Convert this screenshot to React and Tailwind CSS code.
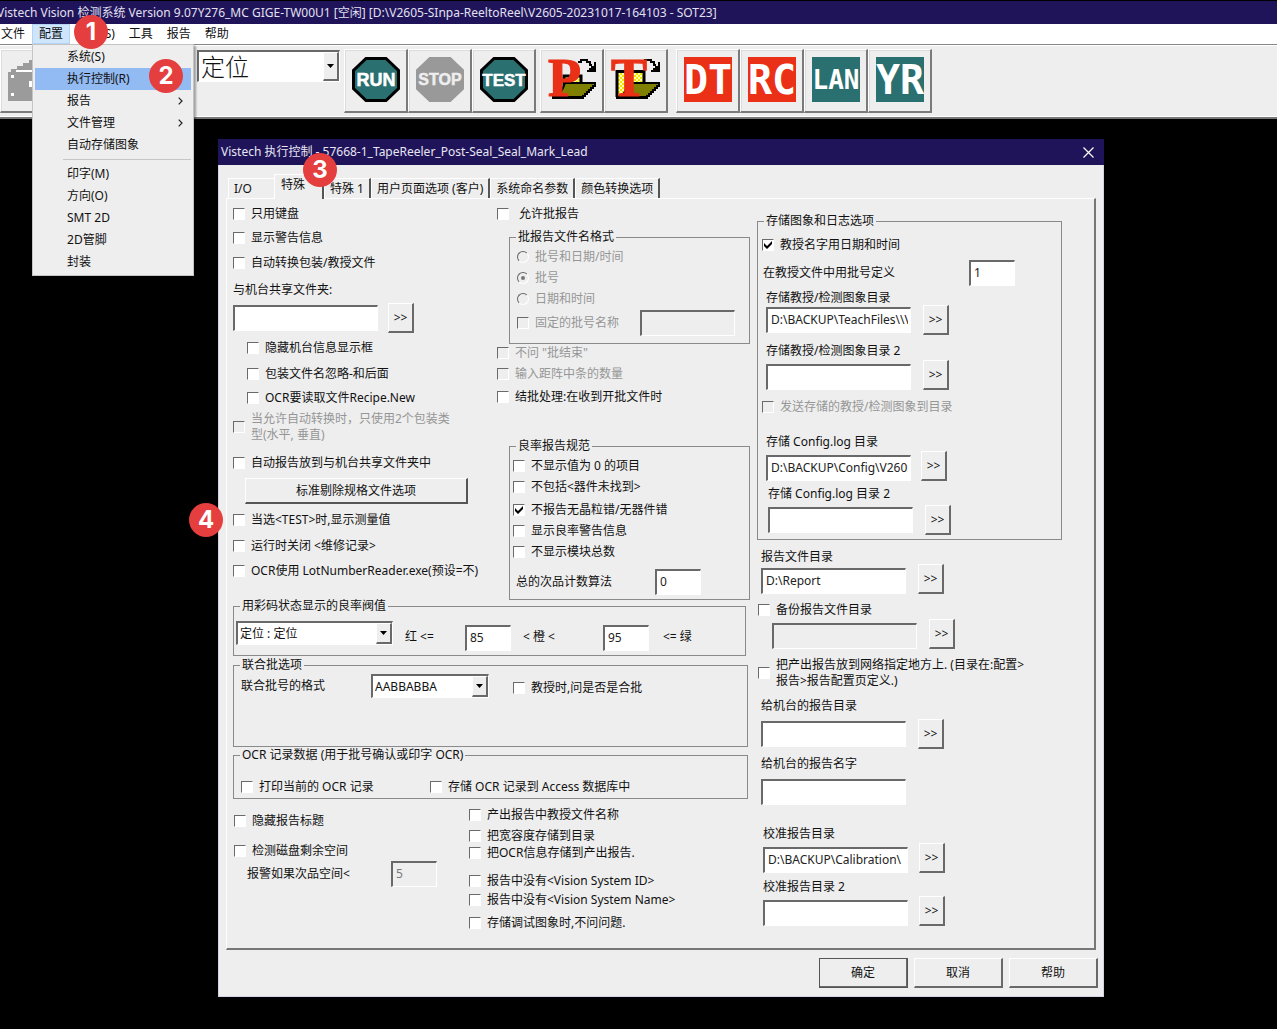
import React, { useId } from "react";

const CHECK_PATH = "M2 4v3l3 3 5-5V2L5 7z";

function Badge({ n, className }) {
  return (
    <span
      className={`pointer-events-none absolute z-30 flex size-[34px] items-center justify-center rounded-full bg-[#e53e3e] font-['Inter','Liberation_Sans',sans-serif] text-2xl font-bold leading-none text-white ${className}`}
    >
      {n}
    </span>
  );
}

function Check({ label, className = "", gap = "gap-1.5", disabled, checked, children }) {
  return (
    <label className={`relative flex items-center ${gap} ${disabled ? "text-[#969696]" : ""} ${className}`}>
      <span className="grid size-3 shrink-0">
        <input
          type="checkbox"
          defaultChecked={checked}
          disabled={disabled}
          className="peer col-start-1 row-start-1 size-3 appearance-none border border-b-white border-l-[#6a6a6a] border-r-white border-t-[#6a6a6a] bg-white disabled:bg-[#eeeeee]"
        />
        <svg viewBox="0 0 12 12" className="pointer-events-none invisible col-start-1 row-start-1 size-3 peer-checked:visible">
          <path d={CHECK_PATH} fill="#000" />
        </svg>
      </span>
      <span className="leading-4">{label}</span>
      {children}
    </label>
  );
}

function Radio({ label, className = "", checked }) {
  return (
    <label className={`flex items-center gap-1.5 text-[#969696] ${className}`}>
      <span className="grid size-3 shrink-0">
        <input
          type="radio"
          name="lot-name-format"
          disabled
          defaultChecked={checked}
          className="peer col-start-1 row-start-1 size-3 appearance-none rounded-full border border-b-white border-l-[#666] border-r-white border-t-[#666] bg-[#eeeeee]"
        />
        <span className="invisible col-start-1 row-start-1 size-1 place-self-center rounded-full bg-[#777] peer-checked:visible" />
      </span>
      <span className="leading-4">{label}</span>
    </label>
  );
}

function TextBox({ className = "w-36", id, label, value = "", disabled }) {
  return (
    <input
      id={id}
      aria-label={label}
      type="text"
      defaultValue={value}
      disabled={disabled}
      className={`h-[26px] min-w-0 shrink-0 border-b border-l-2 border-r border-t-2 border-b-white border-l-[#696969] border-r-white border-t-[#696969] bg-white pb-0.5 pl-[3px] pr-0.5 text-[#222] disabled:bg-[#eeeeee] disabled:text-[#777] ${className}`}
    />
  );
}

function Browse({ className = "", label = "浏览" }) {
  return (
    <button
      type="button"
      aria-label={label}
      className={`h-[30px] w-[26px] shrink-0 border-b-2 border-l border-r-2 border-t border-b-[#696969] border-l-white border-r-[#696969] border-t-white bg-[#eeeeee] ${className}`}
    >
      &gt;&gt;
    </button>
  );
}

function PathRow({ label, value, className = "", rowClass = "mt-1", boxGap = "gap-3", align = "items-center", browse = true }) {
  const id = useId();
  return (
    <div className={className}>
      <label htmlFor={id} className="block leading-4">{label}</label>
      <div className={`flex ${align} ${boxGap} ${rowClass}`}>
        <TextBox id={id} value={value} className="w-[145px]" />
        {browse && <Browse label={`浏览 ${label}`} />}
      </div>
    </div>
  );
}

function Group({ title, className = "", pad = "", children }) {
  return (
    <fieldset className={`min-w-0 border border-[#8a8a8a] ${className}`}>
      <legend className="ml-1.5 px-0.5 leading-4">{title}</legend>
      <div className={`flow-root ${pad}`}>{children}</div>
    </fieldset>
  );
}

function Combo({ value, label, className = "", big }) {
  return (
    <span className={`grid shrink-0 ${className}`}>
      <select
        aria-label={label}
        defaultValue={value}
        className={`col-start-1 row-start-1 w-full appearance-none border-b border-l-2 border-r border-t-2 border-b-white border-l-[#696969] border-r-white border-t-[#696969] bg-white pl-0.5 ${
          big ? "h-8 text-2xl font-light leading-none" : "h-6"
        }`}
      >
        <option>{value}</option>
      </select>
      <span
        className={`pointer-events-none col-start-1 row-start-1 mr-px mt-0.5 flex w-4 items-center justify-center justify-self-end border-b-2 border-l border-r-2 border-t border-b-[#696969] border-l-white border-r-[#696969] border-t-white bg-[#eeeeee] ${
          big ? "h-[29px]" : "h-[21px]"
        }`}
      >
        <svg viewBox="0 0 7 4" className="h-1 w-[7px] shrink-0"><path d="M0 0h7L3.5 4z" /></svg>
      </span>
    </span>
  );
}

function ToolButton({ label, children }) {
  return (
    <button
      type="button"
      aria-label={label}
      className="flex size-16 items-start justify-start border-b-2 border-l border-r-2 border-t border-b-[#7a7a7a] border-l-white border-r-[#7a7a7a] border-t-white bg-[#eeeeee] pl-[7px] pt-[7px] shadow-[inset_1px_1px_0_#dcdcdc]"
    >
      <svg viewBox="0 0 48 45" className="h-[45px] w-12 shrink-0 overflow-visible">{children}</svg>
    </button>
  );
}

function Octagon({ text, size, fill, stroke, color, y }) {
  return (
    <>
      <path d="M14 1.5h20l12.500 12v18l-12.500 12H14L1.500 31.500v-18z" fill={fill} stroke={stroke} strokeWidth="3" />
      <text x="24" y={y} textAnchor="middle" fontSize={size} fontWeight="700" fontFamily="Liberation Sans, sans-serif" fill={color} stroke={color} strokeWidth="0.5">{text}</text>
    </>
  );
}

function Sign({ text, fill, size, y, weight = 700 }) {
  return (
    <>
      <rect width="48" height="45" fill={fill} />
      <text x="24" y={y} textAnchor="middle" fontSize={size} fontWeight={weight} fontFamily="DejaVu Sans Mono, monospace" fill="#fff">{text}</text>
    </>
  );
}

function FolderIcon({ letter }) {
  const isT = letter === "T";
  return (
    <>
      <defs>
        <pattern id={`dots-${letter}`} width="4" height="4" patternUnits="userSpaceOnUse">
          <rect width="4" height="4" fill="#ffffb8" />
          <path d="M0 0h2v2H0zM2 2h2v2H2z" fill="#f2e600" />
        </pattern>
      </defs>
      <path d={isT ? "M5 40V14.500h27V26" : "M16 40V19h17v7"} fill={`url(#dots-${letter})`} stroke="#000" strokeWidth="3" />
      <path d="M17 26h30v3h-2v2h-2v2h-2v2h-2v2h-2v2h-2v2H9l3-5 3-5z" fill="#808000" stroke="#000" strokeWidth="2" />
      <path d="M4 39h32v3H4z" fill="#000" />
      <path d="M30 5h3V3h6v2h3v3h2" fill="none" stroke="#000" strokeWidth="2" />
      <path d="M48 5v10h-9v-2h2v-2h2V9h3V5z" fill="#000" />
      <text x={isT ? -1 : 0} y="39" fontSize="54" fontWeight="700" fontFamily="Liberation Serif, serif" fill="#ea3016" stroke="#ea3016" strokeWidth="1.200">{letter}</text>
    </>
  );
}

const MENU = [
  ["系统(S)"], ["执行控制(R)", "active"], ["报告", "sub"], ["文件管理", "sub"], ["自动存储图象"], null,
  ["印字(M)"], ["方向(O)"], ["SMT 2D"], ["2D管脚"], ["封装"],
];

function DropMenu() {
  return (
    <div role="menu" className="absolute left-0 top-full z-20 w-[162px] border border-[#c4c4c4] bg-[#eeeeee] px-0.5 pb-0.5 pt-px shadow-[2px_2px_2px_#00000055]">
      {MENU.map((item, i) =>
        item === null ? (
          <hr key={i} className="my-[3px] ml-7 border-t border-[#c6c6c6]" />
        ) : (
          <button
            key={i}
            type="button"
            role="menuitem"
            className={`relative flex h-[22px] w-full items-center justify-between pl-8 pr-2 text-left ${item[1] === "active" ? "bg-[#93bbf3]" : ""}`}
          >
            {item[0]}
            {item[1] === "sub" && (
              <svg viewBox="0 0 5 8" className="h-2 w-[5px]"><path d="M.7.7 4 4 .7 7.300" fill="none" stroke="#222" strokeWidth="1.200" /></svg>
            )}
            {item[1] === "active" && <Badge n="2" className="right-2 top-[-9px]" />}
          </button>
        )
      )}
    </div>
  );
}

function MenuBar() {
  return (
    <nav className="relative z-20 flex h-5 bg-white">
      <button type="button" className="-ml-1.5 px-[7px]">文件</button>
      <div className="relative">
        <button type="button" className="h-5 border border-[#b4d3f2] bg-[#cfe5fb] px-1.5">配置</button>
        <DropMenu />
      </div>
      <button type="button" className="relative px-[7px]">
        设置(S)
        <Badge n="1" className="left-1 top-[-9px]" />
      </button>
      <button type="button" className="px-[7px]">工具</button>
      <button type="button" className="px-[7px]">报告</button>
      <button type="button" className="px-[7px]">帮助</button>
    </nav>
  );
}

function Toolbar() {
  return (
    <div className="flex h-[75px] items-start border-b-2 border-t border-b-[#777] border-t-[#888] bg-[#eeeeee] pt-1 shadow-[inset_0_1px_0_#fff,inset_0_-1px_0_#fff]">
      <div className="mr-[133px]">
        <ToolButton label="相机">
          <path d="M0 16h3v-3h6v-3h6V7h6V4h6V1h21v44H0z" transform="translate(0 -1)" fill="#9b9b9b" />
          <path d="M8 13h20v2H8zM3 18h3v3H3zM21 24h3v6h-3zM3 36h3v3H3z" fill="#fff" />
        </ToolButton>
      </div>
      <Combo big value="定位" label="工位" className="mr-1 w-[143px] pt-px" />
      <div className="flex">
        <ToolButton label="RUN"><Octagon text="RUN" size="18" y="29" fill="#2b7071" stroke="#000" color="#fff" /></ToolButton>
        <ToolButton label="STOP"><Octagon text="STOP" size="16" y="28" fill="#999" stroke="#999" color="#eee" /></ToolButton>
        <ToolButton label="TEST"><Octagon text="TEST" size="17" y="29" fill="#2b7071" stroke="#000" color="#fff" /></ToolButton>
      </div>
      <div className="ml-1 flex">
        <ToolButton label="P"><FolderIcon letter="P" /></ToolButton>
        <ToolButton label="T"><FolderIcon letter="T" /></ToolButton>
      </div>
      <div className="ml-2 flex">
        <ToolButton label="DT"><Sign text="DT" size="40" y="37" fill="#ea3016" /></ToolButton>
        <ToolButton label="RC"><Sign text="RC" size="40" y="37" fill="#ea3016" /></ToolButton>
        <ToolButton label="LAN"><Sign text="LAN" size="26" y="32" fill="#2b7071" /></ToolButton>
        <ToolButton label="YR"><Sign text="YR" size="40" y="37" fill="#2b7071" /></ToolButton>
      </div>
    </div>
  );
}

function Tabs() {
  const tab = "h-5 border-l border-t border-white px-[5px] whitespace-nowrap text-left";
  return (
    <div role="tablist" className="ml-0.5 flex h-6 items-end">
      <button type="button" role="tab" className={`${tab} w-[46px]`}>I/O</button>
      <button
        type="button"
        role="tab"
        aria-selected="true"
        className="relative z-10 -mb-px h-[25px] w-[50px] border-l border-r-2 border-t border-l-white border-r-[#555] border-t-white bg-[#eeeeee] px-1.5 pb-1 text-left"
      >
        特殊
        <Badge n="3" className="left-7 top-[-22px]" />
      </button>
      {["特殊 1", "用户页面选项 (客户)", "系统命名参数", "颜色转换选项"].map((t) => (
        <button key={t} type="button" role="tab" className={`${tab} border-r-2 border-r-[#555]`}>{t}</button>
      ))}
    </div>
  );
}

function GeneralOptions() {
  return (
    <div className="flex flex-col items-start">
      <Check label="只用键盘" />
      <Check label="显示警告信息" className="mt-2" />
      <Check label="自动转换包装/教授文件" className="mt-[9px]" />
      <label htmlFor="share" className="mt-[11px] leading-4">与机台共享文件夹:</label>
      <div className="mt-[5px] flex items-center gap-2.5">
        <TextBox id="share" className="w-[145px]" />
        <Browse />
      </div>
      <Check label="隐藏机台信息显示框" className="ml-3.5 mt-[7px]" />
      <Check label="包装文件名忽略-和后面" className="ml-3.5 mt-2.5" />
      <Check label="OCR要读取文件Recipe.New" className="ml-3.5 mt-2" />
      <Check
        disabled
        className="mt-[5px]"
        label={<>当允许自动转换时，只使用2个包装类<br />型(水平, 垂直)</>}
      />
      <Check label="自动报告放到与机台共享文件夹中" className="mt-3" />
      <button type="button" className="ml-3 mt-[7px] h-[26px] w-[223px] border-b-2 border-l border-r-2 border-t border-b-[#555] border-l-white border-r-[#555] border-t-white">
        标准剔除规格文件选项
      </button>
      <Check label="当选<TEST>时,显示测量值" className="mt-2">
        <Badge n="4" className="left-[-44px] top-[-9px]" />
      </Check>
      <Check label="运行时关闭 <维修记录>" className="mt-2.5" />
      <Check label="OCR使用 LotNumberReader.exe(预设=不)" className="mt-[9px] whitespace-nowrap" />
    </div>
  );
}

function LotReport() {
  return (
    <div className="flex flex-col items-stretch">
      <Check label="允许批报告" gap="gap-2.5" />
      <Group title="批报告文件名格式" className="ml-3 mt-[7px]" pad="pb-[7px] pl-[7px]">
        <Radio label="批号和日期/时间" className="mt-1" />
        <Radio label="批号" checked className="mt-[5px]" />
        <Radio label="日期和时间" className="mt-[5px]" />
        <div className="mt-[3px] flex items-center justify-between pr-3.5">
          <Check disabled label="固定的批号名称" />
          <TextBox disabled label="固定的批号名称" className="w-[95px]" />
        </div>
      </Group>
      <Check disabled label={'不问 "批结束"'} className="mt-px" />
      <Check disabled label="输入距阵中条的数量" className="mt-[5px]" />
      <Check label="结批处理:在收到开批文件时" className="mt-[7px]" />
      <Group title="良率报告规范" className="ml-3 mt-[33px]" pad="pb-1 pl-[3px]">
        <Check label="不显示值为 0 的项目" className="mt-1" />
        <Check label="不包括<器件未找到>" className="mt-[5px]" />
        <Check checked label="不报告无晶粒错/无器件错" className="mt-[7px]" />
        <Check label="显示良率警告信息" className="mt-[5px]" />
        <Check label="不显示模块总数" className="mt-[5px]" />
        <div className="mt-[9px] flex items-center justify-between pl-[3px] pr-12">
          <label htmlFor="defect">总的次品计数算法</label>
          <TextBox id="defect" value="0" className="w-[46px]" />
        </div>
      </Group>
    </div>
  );
}

function LeftArea() {
  return (
    <div className="min-w-0">
      <div className="grid grid-cols-[264fr_253fr]">
        <GeneralOptions />
        <LotReport />
      </div>

      <Group title="用彩码状态显示的良率阀值" className="-mt-0.5 mr-1" pad="pb-1 pl-0.5">
        <div className="mt-[7px] flex items-start">
          <Combo value="定位 : 定位" label="定位" className="w-[157px]" />
          <label htmlFor="red" className="ml-3 mt-2 w-[60px] leading-4">红 &lt;=</label>
          <TextBox id="red" value="85" className="mt-1 w-[46px]" />
          <label htmlFor="orange" className="ml-3 mt-2 w-20 leading-4">&lt; 橙 &lt;</label>
          <TextBox id="orange" value="95" className="mt-1 w-[46px]" />
          <span className="ml-3.5 mt-2 leading-4">&lt;= 绿</span>
        </div>
      </Group>

      <Group title="联合批选项" className="mr-0.5 mt-px" pad="pb-12 pl-[7px]">
        <div className="mt-px flex items-center">
          <span className="w-[130px]">联合批号的格式</span>
          <Combo value="AABBABBA" label="联合批号的格式" className="w-[118px]" />
          <Check label="教授时,问是否是合批" className="ml-6 mt-1" />
        </div>
      </Group>

      <Group title="OCR 记录数据 (用于批号确认或印字 OCR)" className="mr-0.5" pad="pb-[3px] pl-[7px]">
        <div className="mt-4 flex">
          <Check label="打印当前的 OCR 记录" className="w-[189px]" />
          <Check label="存储 OCR 记录到 Access 数据库中" />
        </div>
      </Group>

      <div className="mt-2 grid grid-cols-[236fr_281fr]">
        <div className="pl-px pt-1.5">
          <Check label="隐藏报告标题" />
          <Check label="检测磁盘剩余空间" className="mt-3.5" />
          <div className="mt-0.5 flex items-center justify-between pl-[13px] pr-8">
            <label htmlFor="disk">报警如果次品空间&lt;</label>
            <TextBox id="disk" value="5" disabled className="w-[46px]" />
          </div>
        </div>
        <div>
          <Check label="产出报告中教授文件名称" />
          <Check label="把宽容度存储到目录" className="mt-[5px]" />
          <Check label="把OCR信息存储到产出报告." className="mt-px" />
          <Check label="报告中没有<Vision System ID>" className="mt-3" />
          <Check label="报告中没有<Vision System Name>" className="mt-[3px]" />
          <Check label="存储调试图象时,不问问题." className="mt-[7px]" />
        </div>
      </div>
    </div>
  );
}

function RightArea() {
  return (
    <div className="min-w-0 pt-[7px]">
      <Group title="存储图象和日志选项" className="mr-8" pad="pb-1 pl-1">
        <Check checked label="教授名字用日期和时间" className="mt-2" />
        <div className="mt-[7px] flex items-center justify-between pl-px pr-[46px]">
          <label htmlFor="lotdef">在教授文件中用批号定义</label>
          <TextBox id="lotdef" value="1" className="w-[46px]" />
        </div>
        <PathRow label="存储教授/检测图象目录" value={"D:\\BACKUP\\TeachFiles\\\\V2605"} className="ml-1 mt-1" rowClass="-mt-px" />
        <PathRow label="存储教授/检测图象目录 2" className="ml-1 mt-2" rowClass="mt-px" align="items-end" />
        <Check disabled label="发送存储的教授/检测图象到目录" className="mt-[9px]" />
        <PathRow label="存储 Config.log 目录" value={"D:\\BACKUP\\Config\\V2605"} className="ml-1 mt-[19px]" rowClass="mt-px" boxGap="gap-2.5" align="items-end" />
        <PathRow label="存储 Config.log 目录 2" className="ml-1.5 mt-[5px]" rowClass="mt-[3px]" />
      </Group>

      <PathRow label="报告文件目录" value={"D:\\Report"} className="ml-1 mt-[9px]" rowClass="-mt-px" align="items-end" />
      <Check label="备份报告文件目录" className="ml-px mt-2" />
      <div className="ml-[15px] mt-px flex items-end gap-3">
        <TextBox disabled label="备份报告文件目录" className="w-[145px]" />
        <Browse />
      </div>
      <Check
        className="ml-px mt-2"
        label={<>把产出报告放到网络指定地方上. (目录在:配置&gt;<br />报告&gt;报告配置页定义.)</>}
      />
      <PathRow label="给机台的报告目录" className="ml-1 mt-[9px]" rowClass="mt-[5px]" />
      <PathRow label="给机台的报告名字" className="ml-1 mt-[7px]" rowClass="mt-[7px]" browse={false} />
      <PathRow label="校准报告目录" value={"D:\\BACKUP\\Calibration\\"} className="ml-1.5 mt-[21px]" rowClass="mt-px" boxGap="gap-[11px]" align="items-end" />
      <PathRow label="校准报告目录 2" className="ml-1.5 mt-1.5" rowClass="mt-px" boxGap="gap-[11px]" align="items-end" />
    </div>
  );
}

function Dialog() {
  const action = "h-[30px] w-[89px] border-b-2 border-l border-r-2 border-t border-b-[#696969] border-l-white border-r-[#696969] border-t-white";
  return (
    <section role="dialog" aria-labelledby="dlg-title" className="ml-[218px] mr-[173px] mt-5 border-x border-b border-[#d5d2e6] bg-[#eeeeee]">
      <header className="-mx-px flex h-[26px] items-center justify-between bg-[#1f1459] pl-[3px] pr-2.5 text-[#e8e6f4]">
        <h1 id="dlg-title">Vistech 执行控制 - 57668-1_TapeReeler_Post-Seal_Seal_Mark_Lead</h1>
        <button type="button" aria-label="关闭">
          <svg viewBox="0 0 11 11" className="size-[11px]"><path d="M.5.5l10 10M10.500.5l-10 10" stroke="#fff" strokeWidth="1.200" /></svg>
        </button>
      </header>
      <div className="px-[7px] pb-2 pt-[9px]">
        <Tabs />
        <div className="grid grid-cols-[517fr_337fr] gap-x-[7px] border-b-2 border-l border-r-2 border-t border-b-[#777] border-l-white border-r-[#777] border-t-white pb-[17px] pl-1.5 pt-[7px]">
          <LeftArea />
          <RightArea />
        </div>
        <div className="-mr-0.5 mt-2 flex justify-end gap-1.5">
          <button type="button" className={`${action} outline-1 -outline-offset-1 outline-[#555]`}>确定</button>
          <button type="button" className={action}>取消</button>
          <button type="button" className={action}>帮助</button>
        </div>
      </div>
    </section>
  );
}

export default function App() {
  return (
    <div className="min-h-screen overflow-hidden bg-black font-['Noto_Sans','Noto_Sans_CJK_SC',sans-serif] text-xs leading-4 text-[#111]">
      <header className="mt-px flex h-[23px] items-center overflow-hidden whitespace-nowrap bg-[#1f1459] text-[#e2e0f0]">
        <span className="-ml-[3px]">
          Vistech Vision 检测系统 Version 9.07Y276_MC GIGE-TW00U1 [空闲] [D:\V2605-SInpa-ReeltoReel\V2605-20231017-164103 - SOT23]
        </span>
      </header>
      <MenuBar />
      <Toolbar />
      <Dialog />
    </div>
  );
}
